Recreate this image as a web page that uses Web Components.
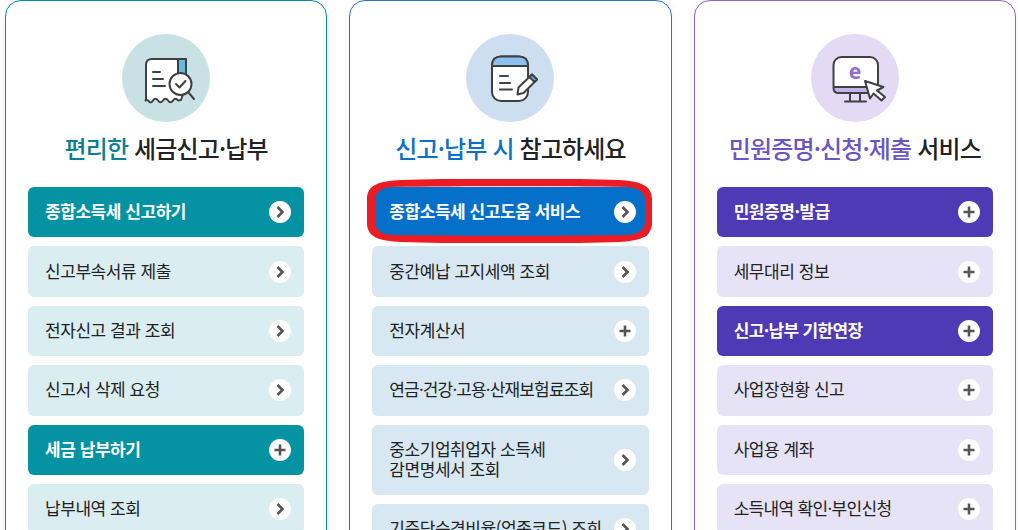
<!DOCTYPE html>
<html lang="ko">
<head>
<meta charset="utf-8">
<title>세금신고 납부</title>
<style>
  html, body {
    margin: 0;
    height: 530px;
    overflow: hidden;
    background: #fff;
    font-family: "Noto Sans CJK KR", "Noto Sans", sans-serif;
  }
</style>
</head>
<body>
<service-board>
  <service-card tone="teal">
    <svg slot="icon" width="88" height="88" viewBox="0 0 88 88" fill="none" stroke="#404040" stroke-width="2" stroke-linejoin="round" stroke-linecap="round">
      <path d="M24 66V31q0-6 6-6h34v26l-5 15-3 .5q-2.500-3.500-5 0-2.500 3.500-5 0-2.500-3.500-5 0-2.500 3.500-5 0-2.500-3.500-5 0-2 3.500-4.500.5-1.500-2-3-.5z" fill="#fff"/>
      <path d="M56 25h8v22l-8 2z" fill="#63bcdc"/>
      <path d="M31 38h7M31 45h10M31 52h12"/>
      <circle cx="58.500" cy="50" r="11" fill="#fff"/>
      <path d="M54 50l3.500 3.500 6-6.500M66.500 58.500L72 65"/>
    </svg>
    <span slot="title"><b>편리한</b> 세금신고·납부</span>
    <service-link strong kind="arrow">종합소득세 신고하기</service-link>
    <service-link kind="arrow">신고부속서류 제출</service-link>
    <service-link kind="arrow">전자신고 결과 조회</service-link>
    <service-link kind="arrow">신고서 삭제 요청</service-link>
    <service-link strong kind="plus">세금 납부하기</service-link>
    <service-link kind="arrow">납부내역 조회</service-link>
  </service-card>

  <service-card tone="blue">
    <svg slot="icon" width="88" height="88" viewBox="0 0 88 88" fill="none" stroke="#404040" stroke-width="2" stroke-linejoin="round" stroke-linecap="round">
      <rect x="26" y="22.500" width="36" height="44.500" rx="9" fill="#fff"/>
      <path d="M26 32v-.5q0-9 9-9h18q9 0 9 9v.5z" fill="#8cc0f5"/>
      <path d="M34 42h8M34 49h10M34 55.500h12"/>
      <path d="M52.500 53.500L66 40.500l5 5-13.500 13.500-6 1.500z" fill="#fff"/>
      <path d="M63.500 43l2.500-2.500 5 5-2.500 2.500z" fill="#63bcdc"/>
    </svg>
    <span slot="title"><b>신고·납부 시</b> 참고하세요</span>
    <service-link strong marked kind="arrow">종합소득세 신고도움 서비스</service-link>
    <service-link kind="arrow">중간예납 고지세액 조회</service-link>
    <service-link kind="plus">전자계산서</service-link>
    <service-link kind="arrow" style="letter-spacing:-.85px">연금·건강·고용·산재보험료조회</service-link>
    <service-link kind="arrow">중소기업취업자 소득세<br>감면명세서 조회</service-link>
    <service-link kind="arrow">기준단순경비율(업종코드) 조회</service-link>
  </service-card>

  <service-card tone="purple">
    <svg slot="icon" width="88" height="88" viewBox="0 0 88 88" fill="none" stroke="#404040" stroke-width="2" stroke-linejoin="round" stroke-linecap="round">
      <rect x="22.500" y="23" width="44.500" height="36" rx="8" fill="#fff"/>
      <path d="M22.500 54v-1h44.500v1q0 5-5 5H27.500q-5 0-5-5z" fill="#c3b2ee"/>
      <path d="M39 59v8M49 59v8M34 67.500h21"/>
      <text x="44" y="45" text-anchor="middle" font-family="Noto Sans, sans-serif" font-size="21" font-weight="700" fill="#8a6fd6" stroke="none">e</text>
      <path d="M54 47l18.500 6-6.500 3.500 8 6.500-3.500 3.500-8-7-3.500 5z" fill="#fff"/>
    </svg>
    <span slot="title"><b>민원증명·신청·제출</b> 서비스</span>
    <service-link strong kind="plus">민원증명·발급</service-link>
    <service-link kind="plus">세무대리 정보</service-link>
    <service-link strong kind="plus" style="letter-spacing:-.65px">신고·납부 기한연장</service-link>
    <service-link kind="plus">사업장현황 신고</service-link>
    <service-link kind="plus">사업용 계좌</service-link>
    <service-link kind="plus" style="letter-spacing:-.68px">소득내역 확인·부인신청</service-link>
  </service-card>
</service-board>

<script>
  class ServiceBoard extends HTMLElement {
    constructor() {
      super();
      const shadow = this.attachShadow({ mode: 'open' });
      shadow.innerHTML = `
        <style>
          :host {
            display: grid;
            grid-template-columns: repeat(3, 1fr);
            column-gap: 22px;
            padding: 0 2px 0 5px;
            height: 530px;
            overflow: hidden;
          }
        </style>
        <slot></slot>
      `;
    }
  }

  const tones = {
    teal: ['#068c9c', '#c8e1e5', '#0a7f92', '#0592a2', '#daedf1'],
    blue: ['#2a70c0', '#cddef0', '#0b70c9', '#0570c9', '#d7e8f3'],
    purple: ['#8a63d2', '#e5daf6', '#6a55c8', '#4f3ab5', '#e6e3f7']
  };

  class ServiceCard extends HTMLElement {
    constructor() {
      super();
      const shadow = this.attachShadow({ mode: 'open' });
      shadow.innerHTML = `
        <style>
          :host {
            display: block;
            box-sizing: border-box;
            height: 640px;
            padding: 33px 22px 0;
            border: 1px solid var(--line);
            border-radius: 16px;
            background: #fff;
            box-shadow: 0 0 8px rgba(0, 0, 0, .06);
          }
          .badge {
            width: 88px;
            height: 88px;
            margin: 0 auto;
            border-radius: 50%;
            background: var(--badge);
          }
          ::slotted(svg) {
            display: block;
          }
          h2 {
            margin: 8px -10px 21px;
            font-size: 24px;
            line-height: 36px;
            font-weight: 500;
            letter-spacing: -0.85px;
            text-align: center;
            color: #222;
          }
          .rows {
            display: flex;
            flex-direction: column;
            gap: 9px;
          }
        </style>
        <div class="badge"><slot name="icon"></slot></div>
        <h2><slot name="title"></slot></h2>
        <div class="rows"><slot></slot></div>
      `;
    }

    connectedCallback() {
      const t = tones[this.getAttribute('tone')];
      this.style.setProperty('--line', t[0]);
      this.style.setProperty('--badge', t[1]);
      this.style.setProperty('--strong', t[3]);
      this.style.setProperty('--soft', t[4]);
      const accent = this.querySelector('[slot=title] b');
      accent.style.color = t[2];
      accent.style.fontWeight = '500';
    }
  }

  class ServiceLink extends HTMLElement {
    constructor() {
      super();
      const shadow = this.attachShadow({ mode: 'open' });
      const kind = this.getAttribute('kind');
      const glyph = kind === 'plus'
        ? '<path d="M11 5.500v11M5.500 11h11" stroke-width="2.600"/>'
        : '<path d="M8.500 6l5 5-5 5" stroke-width="2.600"/>';
      const mark = this.hasAttribute('marked') ? `
        <svg class="mark" width="285" height="64" viewBox="0 0 285 64">
          <path fill="#ed1c24" fill-rule="evenodd" d="M34 1C90 -1 200 -1 252 1C272 2 285 6 285 20V44C285 58 272 62 252 63C200 65 90 65 34 63C12 62 0 58 0 44V20C0 6 12 2 34 1Z
            M24 8C100 7 190 7 261 8C271 9 278 13 278 21V43C278 51 271 55 261 56C190 57 100 57 24 56C14 55 8 51 8 43V21C8 13 14 9 24 8Z"/>
        </svg>` : '';
      shadow.innerHTML = `
        <style>
          :host {
            display: flex;
            position: relative;
            align-items: center;
            justify-content: space-between;
            box-sizing: border-box;
            min-height: 50.400px;
            padding: 14px 13px 16px 17px;
            border-radius: 6px;
            background: var(--soft);
            color: #222;
            font-size: 17px;
            line-height: 20px;
            letter-spacing: -0.45px;
          }
          :host([strong]) {
            background: var(--strong);
            color: #fff;
            font-weight: 700;
          }
          .text {
            white-space: nowrap;
          }
          .go {
            flex: none;
            width: 22px;
            height: 22px;
            margin-bottom: -2px;
          }
          .mark {
            position: absolute;
            left: -5px;
            top: -8px;
          }
        </style>
        <span class="text"><slot></slot></span>
        <svg class="go" viewBox="0 0 22 22" fill="none" stroke="#555">
          <circle cx="11" cy="11" r="11" fill="#fff" stroke="none"/>
          ${glyph}
        </svg>
        ${mark}
      `;
    }
  }

  customElements.define('service-board', ServiceBoard);
  customElements.define('service-card', ServiceCard);
  customElements.define('service-link', ServiceLink);
</script>
</body>
</html>
